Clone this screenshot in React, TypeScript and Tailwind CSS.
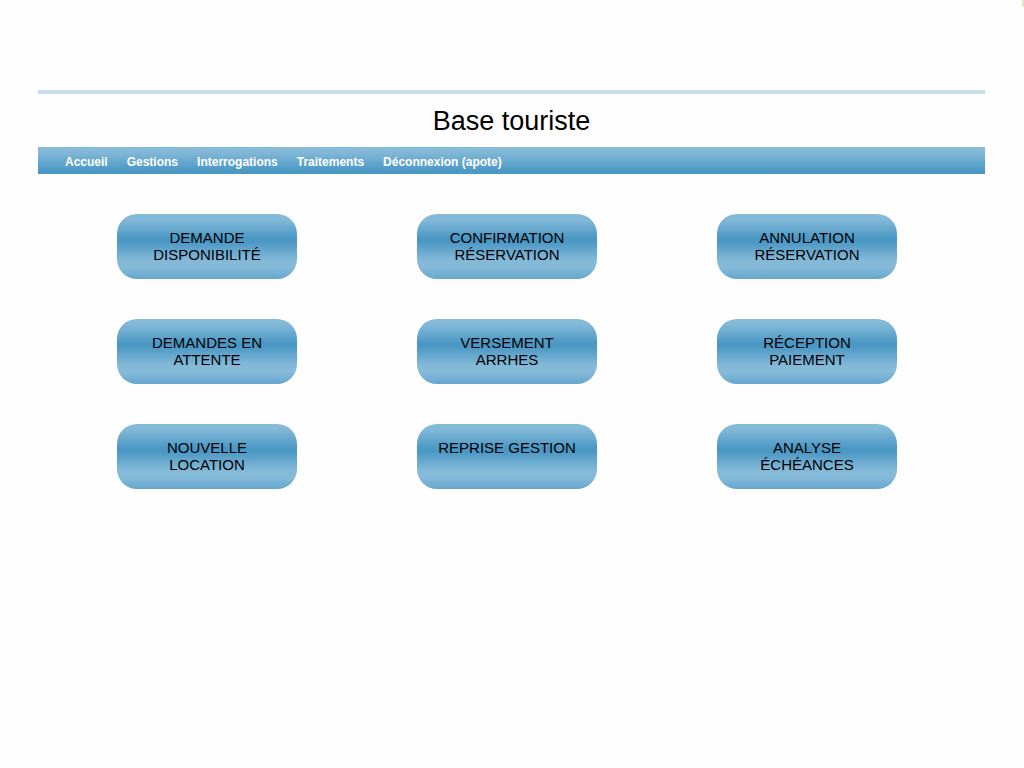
const menu = ['Accueil', 'Gestions', 'Interrogations', 'Traitements', 'Déconnexion (apote)'];

const actions = [
  'DEMANDE DISPONIBILITÉ',
  'CONFIRMATION RÉSERVATION',
  'ANNULATION RÉSERVATION',
  'DEMANDES EN ATTENTE',
  'VERSEMENT ARRHES',
  'RÉCEPTION PAIEMENT',
  'NOUVELLE LOCATION',
  'REPRISE GESTION',
  'ANALYSE ÉCHÉANCES',
];

export default function App() {
  return (
    <div className="relative min-h-screen bg-[#fefefe] pt-[90px] pr-[39px] pb-10 pl-[38px] font-['Liberation_Sans',Arial,sans-serif] text-black">
      <span aria-hidden="true" className="absolute top-0 right-0 h-[7px] w-[2px] bg-[#e5e5cf]" />
      <header>
        <h1 className="border-t-4 border-[#c9e0ec] pt-[11px] pb-[10px] text-center text-[27px] leading-[32px]">
          Base touriste
        </h1>
        <nav
          aria-label="Menu principal"
          className="bg-[linear-gradient(to_bottom,#86bad9_0%,#82b8d7_20%,#4b98c5_88%,#4b98c5_100%)] px-[27px]"
        >
          <ul className="flex flex-wrap gap-x-[19px]">
            {menu.map((item) => (
              <li key={item}>
                <a href="#" className="block pt-[3px] text-[12px] leading-[24px] font-bold text-white">
                  {item}
                </a>
              </li>
            ))}
          </ul>
        </nav>
      </header>
      <main className="flex justify-center pt-10 pr-[9px]">
        <div className="grid grid-cols-[repeat(3,180px)] gap-x-[120px] gap-y-10">
          {actions.map((label) => (
            <button
              key={label}
              type="button"
              className="flex min-h-[65px] cursor-pointer items-start justify-center rounded-[20px] bg-[linear-gradient(to_bottom,#86bad9_0%,#82b8d7_9%,#4b98c5_37%,#4b98c5_43%,#82b8d7_70%,#86bad9_80%,#82b8d7_84%,#65a7cf_100%)] px-5 pt-[15px] text-center text-[15px] leading-[17px]"
            >
              {label}
            </button>
          ))}
        </div>
      </main>
    </div>
  );
}
